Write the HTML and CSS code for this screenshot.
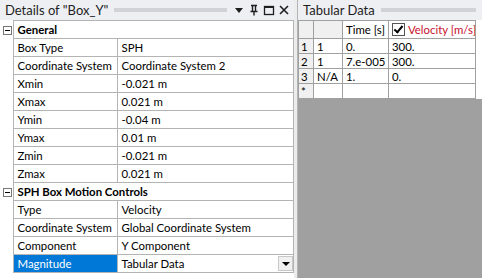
FILE: index.html
```html
<!DOCTYPE html>
<html>
<head>
    <title>Details of "Box_Y"</title>
    <link rel="stylesheet" href="styles.css">
</head>
<body>
    <div class="workspace">
        <div class="panel details">
            <div class="titlebar">
                <span class="title">Details of "Box_Y"</span>
                <span class="grip"></span>
                <span class="tools">
                    <svg width="12" height="12" viewBox="0 0 12 12"><path d="M2 4h8l-4 5z" fill="#1e1e1e"/></svg>
                    <svg width="12" height="12" viewBox="0 0 12 12"><path d="M3 1.5h6M4.5 1.5v6M7.5 1.5v6M2.5 7.5h7M6 7.5v4" stroke="#1e1e1e" stroke-width="1.4" fill="none"/></svg>
                    <svg width="12" height="12" viewBox="0 0 12 12"><rect x="1.5" y="2.5" width="9" height="8" stroke="#1e1e1e" stroke-width="1.3" fill="none"/><path d="M1.5 3h9" stroke="#1e1e1e" stroke-width="2"/></svg>
                    <svg width="12" height="12" viewBox="0 0 12 12"><path d="M2 2l8 8M10 2l-8 8" stroke="#1e1e1e" stroke-width="1.6"/></svg>
                </span>
            </div>
            <table class="props">
                <colgroup><col class="c-gutter"><col class="c-label"><col></colgroup>
                <tr class="group">
                    <td class="gutter"><span class="toggle"></span></td>
                    <td colspan="2">General</td>
                </tr>
                <tr><td class="gutter"></td><td>Box Type</td><td>SPH</td></tr>
                <tr><td class="gutter"></td><td>Coordinate System</td><td>Coordinate System 2</td></tr>
                <tr><td class="gutter"></td><td>Xmin</td><td>-0.021 m</td></tr>
                <tr><td class="gutter"></td><td>Xmax</td><td>0.021 m</td></tr>
                <tr><td class="gutter"></td><td>Ymin</td><td>-0.04 m</td></tr>
                <tr><td class="gutter"></td><td>Ymax</td><td>0.01 m</td></tr>
                <tr><td class="gutter"></td><td>Zmin</td><td>-0.021 m</td></tr>
                <tr><td class="gutter"></td><td>Zmax</td><td>0.021 m</td></tr>
                <tr class="group">
                    <td class="gutter"><span class="toggle"></span></td>
                    <td colspan="2">SPH Box Motion Controls</td>
                </tr>
                <tr><td class="gutter"></td><td>Type</td><td>Velocity</td></tr>
                <tr><td class="gutter"></td><td>Coordinate System</td><td>Global Coordinate System</td></tr>
                <tr><td class="gutter"></td><td>Component</td><td>Y Component</td></tr>
                <tr class="selected">
                    <td class="gutter"></td>
                    <td class="sel">Magnitude</td>
                    <td class="combo">Tabular Data<span class="drop"></span></td>
                </tr>
            </table>
        </div>
        <div class="splitter"></div>
        <div class="panel tabular">
            <div class="titlebar">
                <span class="title">Tabular Data</span>
                <span class="grip"></span>
            </div>
            <table class="grid">
                <colgroup><col class="g-num"><col class="g-step"><col class="g-time"><col class="g-vel"><col></colgroup>
                <tr class="head">
                    <td class="num"></td>
                    <td class="num"></td>
                    <td>Time [s]</td>
                    <td><span class="check"></span><span class="unit">Velocity [m/s]</span></td>
                    <td class="blank"></td>
                </tr>
                <tr><td class="num">1</td><td>1</td><td>0.</td><td>300.</td><td class="blank"></td></tr>
                <tr><td class="num">2</td><td>1</td><td>7.e-005</td><td>300.</td><td class="blank"></td></tr>
                <tr><td class="num">3</td><td>N/A</td><td>1.</td><td>0.</td><td class="blank"></td></tr>
                <tr class="new"><td class="num">*</td><td></td><td></td><td></td><td class="blank"></td></tr>
            </table>
            <div class="empty"></div>
        </div>
    </div>
</body>
</html>
```

FILE: styles.css
```css
body {
    margin: 0;
    font-family: Lato, "Noto Sans", sans-serif;
    font-size: 11.4px;
    color: #000;
    background: #fff;
}

.workspace {
    display: flex;
    height: 278px;
    overflow: hidden;
}

.panel {
    display: flex;
    flex-direction: column;
    background: #fff;
}

.details {
    width: 294px;
}

.tabular {
    flex: 1;
}

.splitter {
    width: 3px;
    background: #ececec;
    border-right: 1px solid #b4b4b4;
}

.titlebar {
    height: 20px;
    display: flex;
    align-items: center;
    background: #eeeff3;
    padding-left: 5px;
    box-sizing: border-box;
}

.title {
    font-size: 13px;
    color: #1e1e1e;
    white-space: nowrap;
}

.grip {
    flex: 1;
    height: 4px;
    margin: 0 6px;
    background-image: radial-gradient(circle, #b0b0b8 0.6px, transparent 0.8px);
    background-size: 2px 2px;
}

.tools {
    display: flex;
    gap: 3px;
    padding-right: 4px;
}

.props {
    border-collapse: collapse;
    width: 294px;
    table-layout: fixed;
}

.c-gutter { width: 13px; }
.c-label { width: 104px; }

.props td {
    height: 17px;
    padding: 0 4px;
    border: 1px solid #b4b4b4;
    white-space: nowrap;
    overflow: hidden;
}

.props td.gutter {
    border: none;
    padding: 0;
    position: relative;
}

.group td {
    font-weight: bold;
}

.toggle {
    position: absolute;
    left: 3px;
    top: 5px;
    width: 7px;
    height: 7px;
    border: 1px solid #777;
    background: #fff;
}

.toggle::after {
    content: "";
    position: absolute;
    left: 1px;
    top: 3px;
    width: 5px;
    height: 1px;
    background: #000;
}

.props td.sel {
    background: #0078d7;
    color: #fff;
}

.props td.combo {
    position: relative;
}

.drop {
    position: absolute;
    right: 0;
    top: 1px;
    width: 15px;
    height: 15px;
    background: #f0f0f0;
    border: 1px solid #c8c8c8;
    box-sizing: border-box;
}

.drop::after {
    content: "";
    position: absolute;
    left: 3px;
    top: 5px;
    border-left: 4px solid transparent;
    border-right: 4px solid transparent;
    border-top: 4px solid #000;
}

.grid {
    border-collapse: collapse;
    width: 100%;
    table-layout: fixed;
}

.g-num { width: 15px; }
.g-step { width: 29px; }
.g-time { width: 46px; }
.g-vel { width: 87px; }

.grid td {
    height: 14px;
    padding: 0 3px;
    border: 1px solid #a0a0a0;
    white-space: nowrap;
    overflow: hidden;
}

.grid .head td {
    height: 17px;
}

.grid td.num {
    background: #f0f0f0;
    padding: 0 2px;
}

.grid td.blank {
    border: none;
}

.check {
    display: inline-block;
    width: 11px;
    height: 11px;
    border: 1px solid #555;
    vertical-align: -2px;
    margin-right: 3px;
    position: relative;
    background: #fff;
}

.check::after {
    content: "";
    position: absolute;
    left: 3px;
    top: 0px;
    width: 3px;
    height: 7px;
    border-right: 2px solid #000;
    border-bottom: 2px solid #000;
    transform: rotate(40deg);
}

.unit {
    color: #c8102e;
}

.empty {
    flex: 1;
    background: #a0a0a0;
}
```
